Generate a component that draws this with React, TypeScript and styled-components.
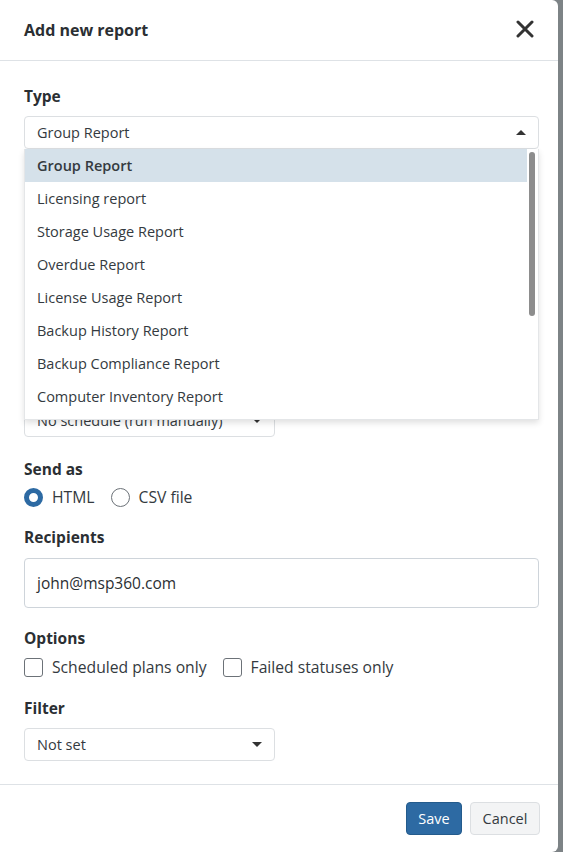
import styled, { createGlobalStyle } from 'styled-components';

const GlobalStyle = createGlobalStyle`
  html, body { margin: 0; padding: 0; background: #7d8386; }
  body { font-family: "Open Sans", "Noto Sans", sans-serif; color: #343a40; }
  * { box-sizing: border-box; }
`;

const TYPES = [
  'Group Report',
  'Licensing report',
  'Storage Usage Report',
  'Overdue Report',
  'License Usage Report',
  'Backup History Report',
  'Backup Compliance Report',
  'Computer Inventory Report',
  'Restore History Report',
  'Immutability Report',
  'Billing Report',
  'Agent Version Report',
  'Consistency Check Report',
];

const Modal = styled.div`
  width: 558px;
  height: 852px;
  background: #fff;
  border-radius: 0 6px 6px 0;
  display: flex;
  flex-direction: column;
`;

const Header = styled.div`
  height: 61px;
  padding: 0 22px 0 24px;
  border-bottom: 1px solid #dee2e6;
  display: flex;
  align-items: center;
  justify-content: space-between;
`;

const Title = styled.h2`
  margin: 0;
  font-size: 16px;
  font-weight: 700;
  color: #2b2f33;
`;

const Close = styled.button`
  border: 0;
  background: none;
  padding: 0;
  width: 20px;
  height: 20px;
  display: flex;
`;

const Body = styled.div`
  flex: 1;
  padding: 25px 19px 0 24px;
`;

const Group = styled.div<{ $gap?: number }>`
  margin-bottom: ${(p) => p.$gap ?? 22}px;
  position: relative;
`;

const Label = styled.div<{ $mb?: number }>`
  font-size: 15.5px;
  font-weight: 700;
  color: #2b2f33;
  line-height: 20px;
  margin-bottom: ${(p) => p.$mb ?? 10}px;
`;

const Select = styled.div<{ $w?: number }>`
  width: ${(p) => (p.$w ? `${p.$w}px` : '100%')};
  height: 33px;
  border: 1px solid #dcdfe2;
  border-radius: 4px;
  padding: 0 12px;
  display: flex;
  align-items: center;
  justify-content: space-between;
  font-size: 14.5px;
  color: #343a40;
  background: #fff;
`;

const Caret = styled.span<{ $up?: boolean }>`
  width: 0;
  height: 0;
  border-left: 5px solid transparent;
  border-right: 5px solid transparent;
  ${(p) => (p.$up ? 'border-bottom: 5px solid #333;' : 'border-top: 5px solid #333;')}
`;

const DropWrap = styled.div`
  position: absolute;
  top: 100%;
  left: 0;
  right: 0;
  height: 271px;
  background: #fff;
  border: 1px solid #e4e6e8;
  border-top: 0;
  box-shadow: 0 3px 6px rgba(0, 0, 0, 0.12);
  overflow: hidden;
  z-index: 5;
`;

const Dropdown = styled.ul`
  margin: 0;
  padding: 0 11px 0 0;
  list-style: none;
`;

const Thumb = styled.div`
  position: absolute;
  right: 3px;
  top: 3px;
  width: 6px;
  height: 164px;
  border-radius: 3px;
  background: #8d8d8d;
`;

const Option = styled.li<{ $active?: boolean }>`
  height: 33px;
  padding: 0 12px;
  display: flex;
  align-items: center;
  font-size: 14.5px;
  color: #343a40;
  background: ${(p) => (p.$active ? '#d5e1ea' : '#fff')};
  font-weight: ${(p) => (p.$active ? 600 : 400)};
`;

const Row = styled.div`
  display: flex;
  align-items: center;
  gap: 16px;
  font-size: 15.7px;
`;

const Choice = styled.label`
  display: flex;
  align-items: center;
  gap: 9px;
  color: #343a40;
`;

const Radio = styled.span<{ $on?: boolean }>`
  width: 19px;
  height: 19px;
  border-radius: 50%;
  border: ${(p) => (p.$on ? '5px solid #2d6aa3' : '1px solid #6c7278')};
  background: #fff;
`;

const Check = styled.span`
  width: 19px;
  height: 19px;
  border-radius: 3px;
  border: 1px solid #6c7278;
`;

const Input = styled.div`
  height: 50px;
  border: 1px solid #ced4da;
  border-radius: 4px;
  padding: 0 12px;
  display: flex;
  align-items: center;
  font-size: 15.5px;
  color: #2b2f33;
`;

const Footer = styled.div`
  height: 68px;
  border-top: 1px solid #dee2e6;
  padding: 0 18px;
  display: flex;
  align-items: center;
  justify-content: flex-end;
  gap: 8px;
`;

const Button = styled.button<{ $primary?: boolean }>`
  height: 33px;
  padding: 0 11px;
  border-radius: 4px;
  font-family: inherit;
  font-size: 14.5px;
  border: 1px solid ${(p) => (p.$primary ? '#245b8c' : '#dcdfe2')};
  background: ${(p) => (p.$primary ? '#2d6aa3' : '#f3f4f5')};
  color: ${(p) => (p.$primary ? '#fff' : '#343a40')};
  min-width: ${(p) => (p.$primary ? 56 : 70)}px;
`;

export default function App() {
  return (
    <>
      <GlobalStyle />
      <Modal>
        <Header>
          <Title>Add new report</Title>
          <Close aria-label="Close">
            <svg width="18" height="18" viewBox="0 0 18 18">
              <path d="M2 2L16 16M16 2L2 16" stroke="#333" strokeWidth="3" strokeLinecap="round" />
            </svg>
          </Close>
        </Header>
        <Body>
          <Group>
            <Label>Type</Label>
            <Select>
              Group Report <Caret $up />
            </Select>
            <DropWrap>
              <Dropdown>
                {TYPES.map((t, i) => (
                  <Option key={t} $active={i === 0}>
                    {t}
                  </Option>
                ))}
              </Dropdown>
              <Thumb />
            </DropWrap>
          </Group>
          <Group>
            <Label>Name</Label>
            <Select>Group Report</Select>
          </Group>
          <Group $gap={55}>
            <Label>Company</Label>
            <Select>All companies <Caret /></Select>
          </Group>
          <Group $gap={22}>
            <Label>Schedule</Label>
            <Select $w={251}>
              No schedule (run manually) <Caret />
            </Select>
          </Group>
          <Group $gap={19}>
            <Label $mb={7}>Send as</Label>
            <Row>
              <Choice><Radio $on /> HTML</Choice>
              <Choice><Radio /> CSV file</Choice>
            </Row>
          </Group>
          <Group $gap={20}>
            <Label $mb={11}>Recipients</Label>
            <Input>john@msp360.com</Input>
          </Group>
          <Group $gap={20}>
            <Label $mb={8}>Options</Label>
            <Row>
              <Choice><Check /> Scheduled plans only</Choice>
              <Choice><Check /> Failed statuses only</Choice>
            </Row>
          </Group>
          <Group $gap={0}>
            <Label>Filter</Label>
            <Select $w={251}>
              Not set <Caret />
            </Select>
          </Group>
        </Body>
        <Footer>
          <Button $primary>Save</Button>
          <Button>Cancel</Button>
        </Footer>
      </Modal>
    </>
  );
}
